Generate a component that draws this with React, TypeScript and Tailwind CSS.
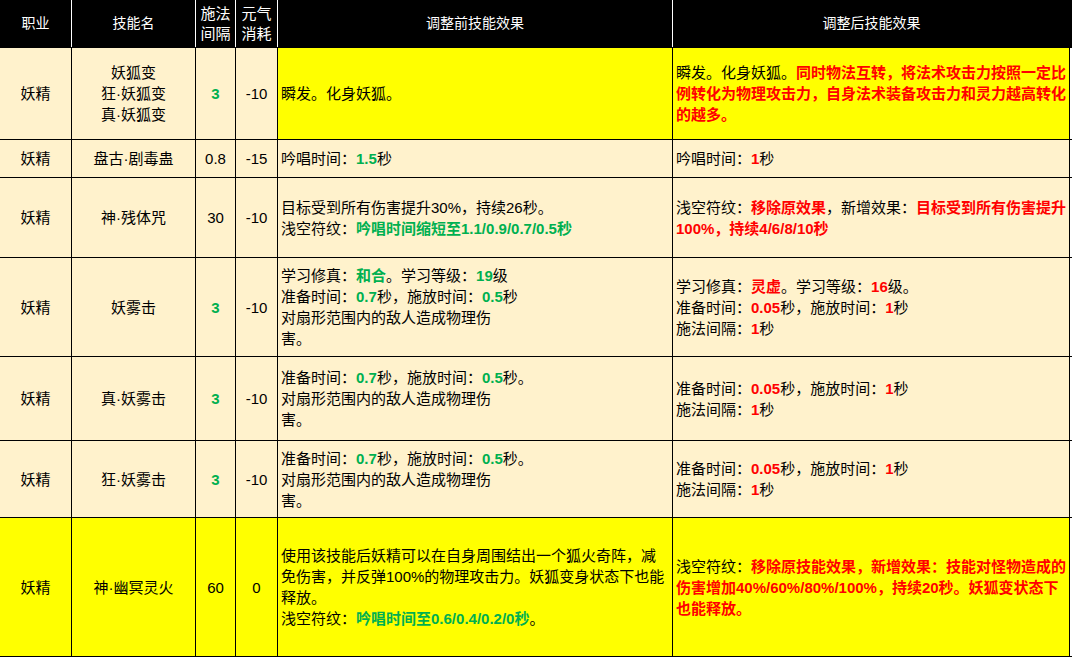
import React from "react";

const G = ({ children }: { children: React.ReactNode }) => <span className="font-bold text-[#00b050]">{children}</span>;
const R = ({ children }: { children: React.ReactNode }) => <span className="font-bold text-[#ff0000]">{children}</span>;

type Row = { h: number; name: React.ReactNode; cd: React.ReactNode; mp: string; before: React.ReactNode; after: React.ReactNode; y1?: boolean; y2?: boolean; yall?: boolean };

const rows: Row[] = [
  { h: 92, name: <>妖狐变<br />狂·妖狐变<br />真·妖狐变</>, cd: <G>3</G>, mp: "-10", y1: true, y2: true,
    before: <>瞬发。化身妖狐。</>,
    after: <>瞬发。化身妖狐。<R>同时物法互转，将法术攻击力按照一定比例转化为物理攻击力，自身法术装备攻击力和灵力越高转化的越多。</R></> },
  { h: 38, name: "盘古·剧毒蛊", cd: "0.8", mp: "-15", before: <>吟唱时间：<G>1.5</G>秒</>, after: <>吟唱时间：<R>1</R>秒</> },
  { h: 80, name: "神·残体咒", cd: "30", mp: "-10",
    before: <>目标受到所有伤害提升30%，持续26秒。<br />浅空符纹：<G>吟唱时间缩短至1.1/0.9/0.7/0.5秒</G></>,
    after: <>浅空符纹：<R>移除原效果</R>，新增效果：<R>目标受到所有伤害提升100%，持续4/6/8/10秒</R></> },
  { h: 99, name: "妖雾击", cd: <G>3</G>, mp: "-10",
    before: <>学习修真：<G>和合</G>。学习等级：<G>19</G>级<br />准备时间：<G>0.7</G>秒，施放时间：<G>0.5</G>秒<br />对扇形范围内的敌人造成物理伤<br />害。</>,
    after: <>学习修真：<R>灵虚</R>。学习等级：<R>16</R>级。<br />准备时间：<R>0.05</R>秒，施放时间：<R>1</R>秒<br />施法间隔：<R>1</R>秒</> },
  { h: 84, name: "真·妖雾击", cd: <G>3</G>, mp: "-10",
    before: <>准备时间：<G>0.7</G>秒，施放时间：<G>0.5</G>秒。<br />对扇形范围内的敌人造成物理伤<br />害。</>,
    after: <>准备时间：<R>0.05</R>秒，施放时间：<R>1</R>秒<br />施法间隔：<R>1</R>秒</> },
  { h: 77, name: "狂·妖雾击", cd: <G>3</G>, mp: "-10",
    before: <>准备时间：<G>0.7</G>秒，施放时间：<G>0.5</G>秒。<br />对扇形范围内的敌人造成物理伤<br />害。</>,
    after: <>准备时间：<R>0.05</R>秒，施放时间：<R>1</R>秒<br />施法间隔：<R>1</R>秒</> },
  { h: 139, name: "神·幽冥灵火", cd: "60", mp: "0", yall: true,
    before: <>使用该技能后妖精可以在自身周围结出一个狐火奇阵，减免伤害，并反弹100%的物理攻击力。妖狐变身状态下也能释放。<br />浅空符纹：<G>吟唱时间至0.6/0.4/0.2/0秒</G>。</>,
    after: <>浅空符纹：<R>移除原技能效果，新增效果：技能对怪物造成的伤害增加40%/60%/80%/100%，持续20秒。妖狐变状态下也能释放。</R></> },
];

const widths = [72, 124, 40, 42, 395, 397];

export default function App() {
  const font = { fontFamily: '"Liberation Sans", "Noto Sans CJK SC", sans-serif' };
  return (
    <div className="w-[1072px] h-[660px] bg-white text-[15px] leading-[21px] text-black" style={font}>
      <div className="flex h-[48px] bg-black text-white border-b border-black text-[14px]">
        {["职业", "技能名", "施法间隔", "元气消耗", "调整前技能效果", "调整后技能效果"].map((t, i) => (
          <div key={i} style={{ width: widths[i] }} className={`flex items-center justify-center text-center ${i < 5 ? "border-r border-white" : ""} ${i === 2 || i === 3 ? "px-[4px] text-[15px] leading-[20px]" : ""}`}>
            {t}
          </div>
        ))}
      </div>
      {rows.map((r, ri) => {
        const base = r.yall ? "bg-[#ffff00]" : "bg-[#fff2cc]";
        return (
          <div key={ri} className="flex border-b border-black" style={{ height: r.h }}>
            <div className={`w-[72px] ${base} border-r border-black flex items-center justify-center`}>妖精</div>
            <div className={`w-[124px] ${base} border-r border-black flex items-center justify-center text-center`}>{r.name}</div>
            <div className={`w-[40px] ${base} border-r border-black flex items-center justify-center`}>{r.cd}</div>
            <div className={`w-[42px] ${base} border-r border-black flex items-center justify-center`}>{r.mp}</div>
            <div className={`w-[395px] ${r.y1 || r.yall ? "bg-[#ffff00]" : "bg-[#fff2cc]"} border-r border-black flex items-center pl-[3px] pr-[2px]`}><div>{r.before}</div></div>
            <div className={`w-[397px] ${r.y2 || r.yall ? "bg-[#ffff00]" : "bg-[#fff2cc]"} border-r border-black flex items-center pl-[3px] pr-[2px]`}><div>{r.after}</div></div>
          </div>
        );
      })}
    </div>
  );
}
